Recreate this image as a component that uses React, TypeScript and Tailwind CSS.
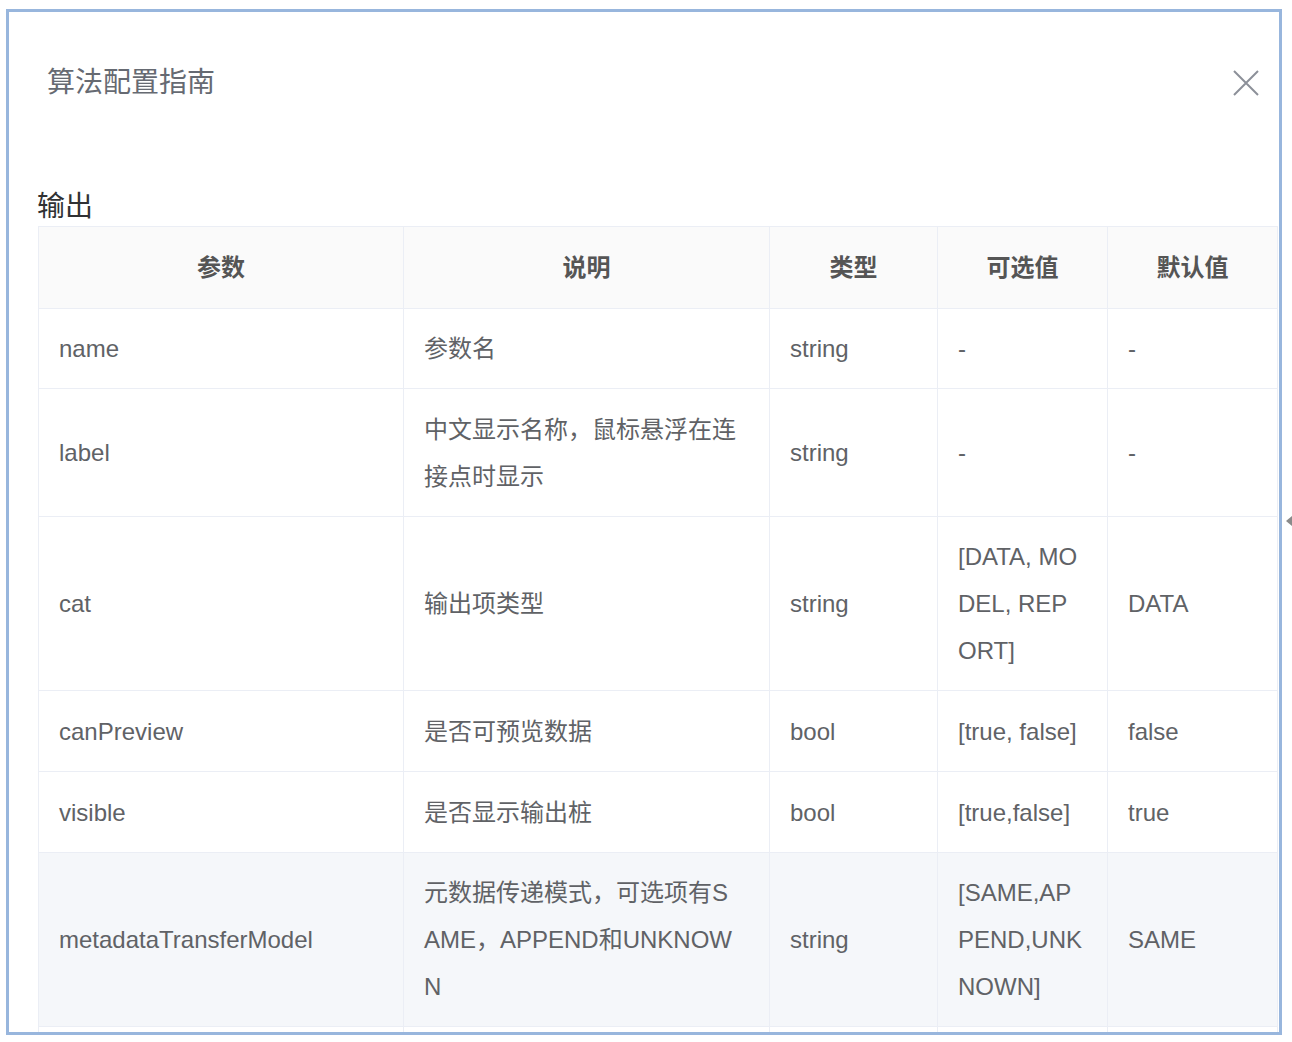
import { ReactNode } from "react";

type Row = {
  name: string;
  desc: ReactNode;
  type: string;
  options: ReactNode;
  def: string;
  h: string;
  hover?: boolean;
};

const rows: Row[] = [
  { name: "name", desc: "参数名", type: "string", options: "-", def: "-", h: "h-[80px]" },
  {
    name: "label",
    desc: (
      <>
        中文显示名称，鼠标悬浮在连
        <br />
        接点时显示
      </>
    ),
    type: "string",
    options: "-",
    def: "-",
    h: "h-[128px]",
  },
  {
    name: "cat",
    desc: "输出项类型",
    type: "string",
    options: (
      <>
        [DATA, MO
        <br />
        DEL, REP
        <br />
        ORT]
      </>
    ),
    def: "DATA",
    h: "h-[174px]",
  },
  { name: "canPreview", desc: "是否可预览数据", type: "bool", options: "[true, false]", def: "false", h: "h-[81px]" },
  { name: "visible", desc: "是否显示输出桩", type: "bool", options: "[true,false]", def: "true", h: "h-[81px]" },
  {
    name: "metadataTransferModel",
    desc: (
      <>
        元数据传递模式，可选项有S
        <br />
        AME，APPEND和UNKNOW
        <br />N
      </>
    ),
    type: "string",
    options: (
      <>
        [SAME,AP
        <br />
        PEND,UNK
        <br />
        NOWN]
      </>
    ),
    def: "SAME",
    h: "h-[174px]",
    hover: true,
  },
];

const headers = ["参数", "说明", "类型", "可选值", "默认值"];

export default function App() {
  return (
    <div
      className="relative w-[1292px] h-[1042px] bg-white overflow-hidden"
      style={{ fontFamily: '"Liberation Sans", "Noto Sans CJK SC", sans-serif' }}
    >
      {/* dialog frame */}
      <div className="ml-[6px] mt-[9px] w-[1276px] h-[1026px] border-[3px] border-[#98b6dd] overflow-hidden">
        <div className="h-[177px] pt-[51px] pl-[38px] pr-[20px]">
          <div className="flex items-center justify-between h-[40px]">
            <span className="text-[28px] leading-[40px] text-[#666a72]">算法配置指南</span>
            <svg width="26" height="26" viewBox="0 0 26 26" className="text-[#8c9099]">
              <path d="M1 1 L25 25 M25 1 L1 25" stroke="currentColor" strokeWidth="2" />
            </svg>
          </div>
        </div>

        <div className="pl-[29px]">
          <div className="text-[28px] leading-[36px] text-[#303133] -ml-[1px] mb-[1px]">输出</div>
          <table className="table-fixed border-collapse w-[1239px] text-[24px] leading-[47px] text-[#606266]">
            <colgroup>
              <col className="w-[365px]" />
              <col className="w-[366px]" />
              <col className="w-[168px]" />
              <col className="w-[170px]" />
              <col className="w-[170px]" />
            </colgroup>
            <thead>
              <tr className="bg-[#fafafa] h-[82px]">
                {headers.map((h) => (
                  <th
                    key={h}
                    className="border border-[#ebeef5] px-[20px] text-center font-bold text-[#555]"
                  >
                    {h}
                  </th>
                ))}
              </tr>
            </thead>
            <tbody>
              {rows.map((r) => (
                <tr key={r.name} className={`${r.h} ${r.hover ? "bg-[#f5f7fa]" : "bg-white"}`}>
                  <td className="border border-[#ebeef5] px-[20px] align-middle">{r.name}</td>
                  <td className="border border-[#ebeef5] px-[20px] align-middle">{r.desc}</td>
                  <td className="border border-[#ebeef5] px-[20px] align-middle">{r.type}</td>
                  <td className="border border-[#ebeef5] px-[20px] align-middle">{r.options}</td>
                  <td className="border border-[#ebeef5] px-[20px] align-middle">{r.def}</td>
                </tr>
              ))}
              <tr className="bg-white h-[80px]">
                <td className="border border-[#ebeef5] px-[20px]">&nbsp;</td>
                <td className="border border-[#ebeef5] px-[20px]">&nbsp;</td>
                <td className="border border-[#ebeef5] px-[20px]">&nbsp;</td>
                <td className="border border-[#ebeef5] px-[20px]">&nbsp;</td>
                <td className="border border-[#ebeef5] px-[20px]">&nbsp;</td>
              </tr>
            </tbody>
          </table>
        </div>
      </div>

      {/* small arrow outside the frame */}
      <svg width="8" height="12" viewBox="0 0 8 12" className="absolute left-[1285px] top-[515px] text-[#8a8a8a]">
        <path d="M1 6 L7 1 L7 11 Z" fill="currentColor" />
      </svg>
    </div>
  );
}
